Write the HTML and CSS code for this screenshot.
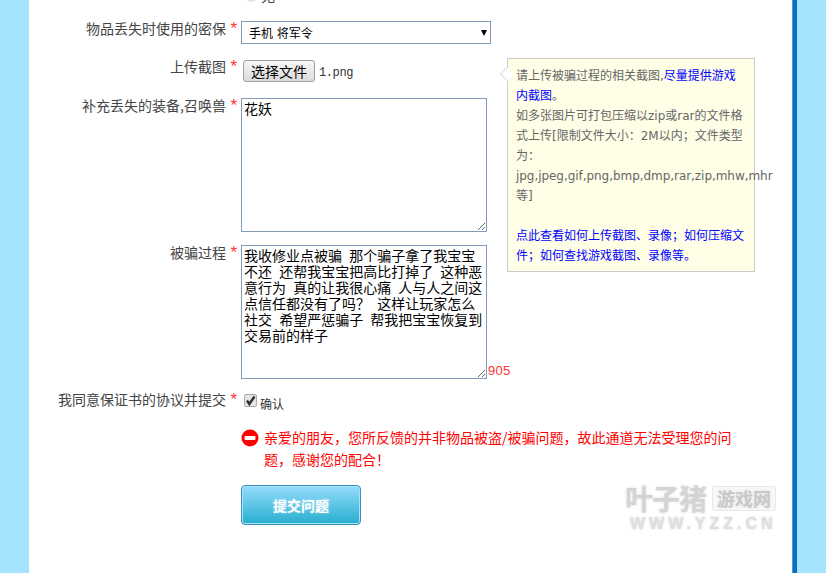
FILE: index.html
```html
<!DOCTYPE html>
<html lang="zh-CN">
<head>
<meta charset="utf-8">
<title>提交问题</title>
<link rel="stylesheet" href="styles.css">
</head>
<body>
<div class="page">
  <form class="form">
    <div class="row row-none">
      <div class="label"></div>
      <div class="field"><span class="radio"></span>无</div>
    </div>
    <div class="row row-select">
      <div class="label">物品丢失时使用的密保<span class="star">*</span></div>
      <div class="field">
        <div class="select-wrap">
          <select class="select"><option>手机 将军令</option></select>
          <span class="select-arrow"></span>
        </div>
      </div>
    </div>
    <div class="row row-file">
      <div class="label">上传截图<span class="star">*</span></div>
      <div class="field file-field">
        <button type="button" class="file-btn">选择文件</button>
        <span class="file-name">1.png</span>
      </div>
      <div class="tip">
        <span class="tip-arrow"></span>
        请上传被骗过程的相关截图,<a class="tip-link">尽量提供游戏内截图</a>。<br>
        如多张图片可打包压缩以zip或rar的文件格式上传[限制文件大小：2M以内；文件类型为：<br>
        <span class="tip-nowrap">jpg,jpeg,gif,png,bmp,dmp,rar,zip,mhw,mhr</span><br>
        等]<br><br>
        <a class="tip-link">点此查看如何上传截图、录像；如何压缩文件；如何查找游戏截图、录像等。</a>
      </div>
    </div>
    <div class="row row-area1">
      <div class="label">补充丢失的装备,召唤兽<span class="star">*</span></div>
      <div class="field"><textarea class="area area-short">花妖</textarea></div>
    </div>
    <div class="row row-area2">
      <div class="label">被骗过程<span class="star">*</span></div>
      <div class="field field-count">
        <textarea class="area area-long">我收修业点被骗 那个骗子拿了我宝宝不还 还帮我宝宝把高比打掉了 这种恶意行为 真的让我很心痛 人与人之间这点信任都没有了吗？ 这样让玩家怎么社交 希望严惩骗子 帮我把宝宝恢复到交易前的样子</textarea>
        <span class="count">905</span>
      </div>
    </div>
    <div class="row row-agree">
      <div class="label">我同意保证书的协议并提交<span class="star">*</span></div>
      <div class="field agree">
        <span class="check">
          <svg width="13" height="13" viewBox="0 0 13 13"><path d="M3 6.5 L5.3 10 L10.5 2.5" fill="none" stroke="#333" stroke-width="2.4"/></svg>
        </span>
        <span class="agree-text">确认</span>
      </div>
    </div>
    <div class="row row-error">
      <div class="label"></div>
      <div class="field error">
        <svg class="error-icon" width="18" height="18" viewBox="0 0 18 18"><circle cx="9" cy="9" r="8.5" fill="#f00"/><rect x="3.5" y="7" width="11" height="4" rx="1" fill="#fff"/></svg>
        <p class="error-text">亲爱的朋友，您所反馈的并非物品被盗/被骗问题，故此通道无法受理您的问题，感谢您的配合！</p>
      </div>
    </div>
    <div class="row row-submit">
      <div class="label"></div>
      <div class="field"><button type="button" class="submit">提交问题</button></div>
    </div>
  </form>
  <div class="watermark">
    <div class="wm-top"><span class="wm-name">叶子猪</span><span class="wm-tag">游戏网</span></div>
    <div class="wm-url">WWW.YZZ.CN</div>
  </div>
</div>
</body>
</html>
```
FILE: styles.css
```css
html, body {
  margin: 0;
  height: 573px;
  overflow: hidden;
  background: #a5e3ff;
}
body {
  font-family: "Noto Sans CJK SC", "Liberation Sans", sans-serif;
  font-size: 14px;
  color: #444;
}
.page {
  position: relative;
  width: 764px;
  height: 573px;
  margin-left: 29px;
  background: #fff;
  border-right: 4px solid #0d6dbe;
  box-shadow: inset -1px 0 0 #4d97d1;
}
.form {
  display: flex;
  flex-direction: column;
}
.row {
  display: flex;
  position: relative;
}
.label {
  width: 212px;
  flex: none;
  box-sizing: border-box;
  padding-right: 4px;
  text-align: right;
  line-height: 15px;
  white-space: nowrap;
}
.star {
  display: inline-block;
  width: 11px;
  text-align: right;
  color: #f33;
  font-family: "Liberation Sans", sans-serif;
  font-size: 17px;
  line-height: 14px;
}
.field { flex: none; }
.row-none {
  height: 35px;
  margin-top: -14px;
  color: #444;
}
.row-none .field { padding-left: 4px; display: flex; align-items: center; height: 18px; }
.radio {
  display: inline-block;
  width: 13px;
  height: 13px;
  margin-right: 3px;
  border-radius: 50%;
  background: #e4e4e4;
}
.row-select { height: 39px; }
.select-wrap {
  position: relative;
  width: 250px;
  height: 23px;
}
.select {
  appearance: none;
  width: 250px;
  height: 23px;
  box-sizing: border-box;
  margin: 0;
  padding: 0 0 0 7px;
  border: 1px solid #7f9db9;
  border-radius: 0;
  background: #fff;
  color: #000;
  font: 12px "Noto Sans CJK SC", sans-serif;
  word-spacing: 1px;
}
.select-arrow {
  position: absolute;
  right: 4px;
  top: 9px;
  width: 0;
  height: 0;
  border-left: 3px solid transparent;
  border-right: 3px solid transparent;
  border-top: 6px solid #000;
}
.row-file { height: 38px; }
.row-file .label { line-height: 11px; }
.file-field { display: flex; align-items: flex-start; padding-left: 2px; }
.file-btn {
  width: 72px;
  height: 22px;
  box-sizing: border-box;
  margin: 0;
  padding: 0;
  border: 1px solid #a0a0a0;
  border-radius: 3px;
  background: linear-gradient(#f6f6f6, #dcdcdc);
  color: #000;
  font: 14px/20px "Noto Sans CJK SC", sans-serif;
}
.file-name {
  margin-left: 4px;
  margin-top: 5px;
  font: 12px/16px "Liberation Mono", monospace;
  letter-spacing: -.4px;
  color: #333;
}
.tip {
  position: absolute;
  left: 478px;
  top: -2px;
  box-sizing: border-box;
  width: 248px;
  height: 214px;
  padding: 7px 8px 8px 8px;
  background: #ffffe8;
  border: 1px solid #ccc;
  color: #666;
  font-family: "DejaVu Sans", "Noto Sans CJK SC", sans-serif;
  font-size: 12px;
  line-height: 20px;
  z-index: 2;
}
.tip-arrow {
  position: absolute;
  left: -6px;
  top: 10px;
  width: 9px;
  height: 9px;
  background: #fff;
  border-left: 1px solid #ddd;
  border-bottom: 1px solid #ddd;
  transform: rotate(45deg);
}
.tip-link { color: #00f; }
.tip-nowrap { white-space: nowrap; letter-spacing: -.05px; }
.row-area1 { height: 147px; }
.area {
  display: block;
  width: 246px;
  height: 134px;
  box-sizing: border-box;
  margin: 0;
  padding: 1px 2px 2px;
  border: 1px solid #7f9db9;
  border-radius: 0;
  outline: none;
  background: #fff;
  color: #000;
  font: 14px/16px "Noto Sans CJK SC", sans-serif;
  word-spacing: 4px;
}
.field-count { display: flex; align-items: flex-end; height: 134px; }
.count {
  margin-left: 1px;
  margin-bottom: 1px;
  color: #f33;
  font: 13px/15px "Liberation Sans", sans-serif;
  letter-spacing: .3px;
}
.row-area2 { height: 147px; }
.row-agree { height: 38px; }
.agree { display: flex; align-items: flex-start; padding-left: 3px; }
.check {
  display: block;
  width: 11px;
  height: 11px;
  margin-top: 2px;
  border: 1px solid #aaa;
  border-radius: 2px;
  background: #e6e6e6;
}
.check svg { display: block; margin: -1px; }
.agree-text { margin-left: 3px; margin-top: 5px; font-size: 12px; line-height: 14px; color: #333; }
.row-error { height: 55px; }
.error { display: flex; width: 496px; align-items: flex-start; margin-top: -1px; }
.error-icon { flex: none; margin-right: 5px; }
.error-text {
  margin: -3px 0 0;
  width: 472px;
  color: #f00;
  font-size: 14px;
  line-height: 22px;
}
.submit {
  display: block;
  width: 120px;
  height: 40px;
  box-sizing: border-box;
  margin: 0;
  padding: 0;
  border: 1px solid #3b90bd;
  border-radius: 4px;
  box-shadow: inset 0 0 0 1px #a8e4fb;
  background: linear-gradient(#95dcfc, #27aed0);
  color: #fff;
  font: bold 14px "Noto Sans CJK SC", sans-serif;
  text-shadow: 0 0 2px rgba(255,255,255,.6);
}
.watermark {
  position: absolute;
  left: 596px;
  top: 484px;
  width: 155px;
  color: #d4d4d4;
  text-shadow: 0 0 3px #ddd, 0 0 3px #fff;
}
.wm-top { display: flex; align-items: center; gap: 6px; }
.wm-name { font-size: 28px; line-height: 28px; font-weight: 700; letter-spacing: -1px; white-space: nowrap; }
.wm-tag {
  padding: 0 4px;
  font-size: 18px;
  line-height: 23px;
  font-weight: 700;
  white-space: nowrap;
  color: #c8c8c8;
  background: #f8f8f8;
  border: 1px solid #e8e8e8;
  border-radius: 3px;
}
.wm-url {
  margin-top: 4px;
  padding-left: 5px;
  font: 700 16px/16px "Liberation Sans", sans-serif;
  letter-spacing: 4px;
  white-space: nowrap;
  color: #dedede;
}
```
